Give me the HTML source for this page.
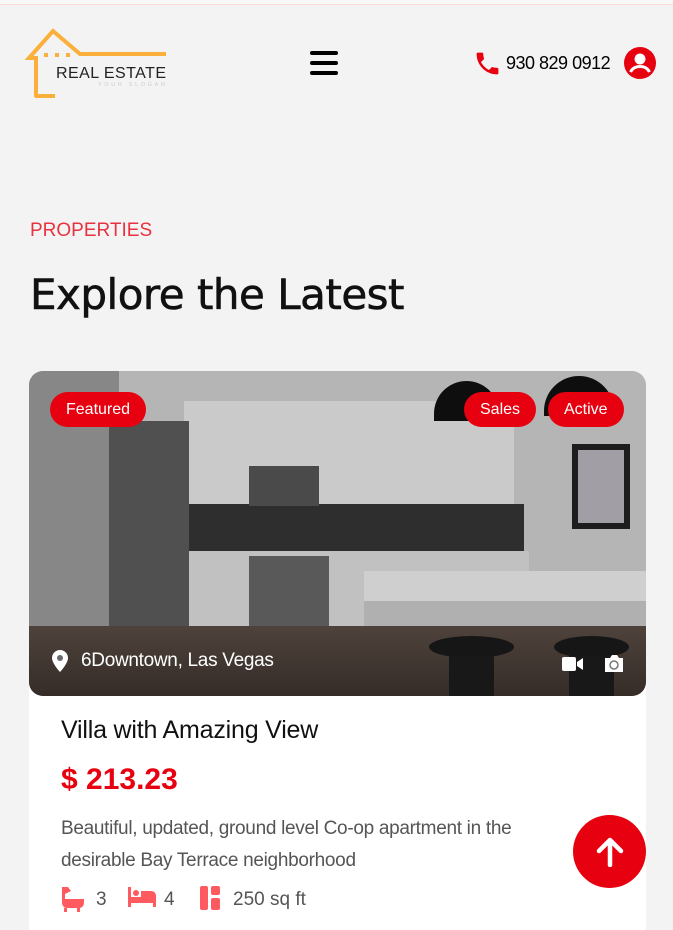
<!DOCTYPE html>
<html><head><meta charset="utf-8"><style>
*{margin:0;padding:0;box-sizing:border-box}
body{width:673px;height:916px;overflow:hidden;background:#f3f3f3;font-family:"Liberation Sans",sans-serif;position:relative}
.a{position:absolute}
.top{left:0;top:0;width:673px;height:5px;border-bottom:1px solid #fbd9d4;background:#f8f8f8}
.pill{position:absolute;top:392px;height:35px;border-radius:18px;background:#e7000f;color:#fff;font-size:16px;line-height:35px;padding:0 16px}
</style></head><body>
<div class="a top"></div>
<!-- logo -->
<svg class="a" style="left:0;top:0" width="180" height="110" viewBox="0 0 180 110">
<path d="M36 97 V58 H29 L53 31 L80 54 H166" fill="none" stroke="#fbb03b" stroke-width="4"/>
<path d="M35 96 H55" stroke="#fbb03b" stroke-width="4"/>
<rect x="44" y="53" width="4" height="4" fill="#fbb03b"/><rect x="55" y="53" width="4" height="4" fill="#fbb03b"/><rect x="66" y="53" width="4" height="4" fill="#fbb03b"/>
<text x="56" y="78" font-family="Liberation Sans" font-size="16" fill="#222" textLength="110">REAL ESTATE</text>
<text x="98" y="86" font-family="Liberation Sans" font-size="5.5" fill="#ccc" letter-spacing="1" textLength="68">YOUR SLOGAN</text>
</svg>
<!-- hamburger -->
<div class="a" style="left:310px;top:51px;width:28px;height:4px;background:#000;border-radius:2px"></div>
<div class="a" style="left:310px;top:61px;width:28px;height:4px;background:#000;border-radius:2px"></div>
<div class="a" style="left:310px;top:71px;width:28px;height:4px;background:#000;border-radius:2px"></div>
<!-- phone -->
<svg class="a" style="left:473px;top:49px" width="29" height="29" viewBox="0 0 24 24"><path d="M6.6 10.8c1.4 2.8 3.8 5.1 6.6 6.6l2.2-2.2c.3-.3.7-.4 1-.2 1.1.4 2.3.6 3.6.6.6 0 1 .4 1 1V20c0 .6-.4 1-1 1C10.6 21 3 13.4 3 4c0-.6.4-1 1-1h3.5c.6 0 1 .4 1 1 0 1.3.2 2.5.6 3.6.1.3 0 .7-.2 1z" fill="#e7000f"/></svg>
<div class="a" style="left:506px;top:53px;font-size:18px;color:#000;letter-spacing:-0.5px">930 829 0912</div>
<svg class="a" style="left:624px;top:47px" width="32" height="32" viewBox="0 0 32 32"><circle cx="16" cy="16" r="16" fill="#e7000f"/><circle cx="16" cy="12" r="5.5" fill="#fff"/><path d="M6.5 25c2-4 5.5-5.5 9.5-5.5s7.5 1.5 9.5 5.5" fill="none" stroke="#fff" stroke-width="3"/></svg>
<div class="a" style="left:30px;top:220px;font-size:19px;color:#e7333f">PROPERTIES</div>
<div class="a" style="left:30px;top:270px;color:#111;font-family:'DejaVu Sans',sans-serif;letter-spacing:-0.5px;font-size:42px;font-weight:500;-webkit-text-stroke:0.6px #111">Explore the Latest</div>
<!-- card -->
<div class="a" style="left:29px;top:680px;width:617px;height:250px;background:#fff"></div>
<div class="a" style="left:29px;top:371px;width:617px;height:325px;border-radius:14px;overflow:hidden;background:#cfcfcf">
 <div class="a" style="left:0;top:0;width:90px;height:325px;background:#9a9a9a"></div>
 <div class="a" style="left:155px;top:30px;width:330px;height:105px;background:#e6e6e6"></div>
 <div class="a" style="left:155px;top:133px;width:340px;height:50px;background:#353535"></div>
 <div class="a" style="left:155px;top:180px;width:345px;height:95px;background:#dcdcdc"></div>
 <div class="a" style="left:220px;top:95px;width:70px;height:40px;background:#555"></div>
 <div class="a" style="left:220px;top:185px;width:80px;height:90px;background:#666"></div>
 <div class="a" style="left:80px;top:50px;width:80px;height:235px;background:#5c5c5c"></div>
 <div class="a" style="left:335px;top:200px;width:282px;height:30px;background:#ececec"></div>
 <div class="a" style="left:335px;top:230px;width:282px;height:60px;background:#c9c9c9"></div>
 <div class="a" style="left:543px;top:73px;width:58px;height:85px;background:#222"></div>
 <div class="a" style="left:549px;top:79px;width:46px;height:73px;background:#b9b4bd"></div>
 <div class="a" style="left:405px;top:10px;width:65px;height:40px;border-radius:35px 35px 0 0;background:#111"></div>
 <div class="a" style="left:515px;top:5px;width:70px;height:40px;border-radius:35px 35px 0 0;background:#111"></div>
 <div class="a" style="left:0;top:255px;width:617px;height:70px;background:linear-gradient(#5a4c44,#3d332e)"></div>
 <div class="a" style="left:400px;top:265px;width:85px;height:22px;border-radius:50%;background:#1a1a1a"></div>
 <div class="a" style="left:525px;top:265px;width:75px;height:22px;border-radius:50%;background:#1a1a1a"></div>
 <div class="a" style="left:420px;top:285px;width:45px;height:40px;background:#1c1c1c"></div>
 <div class="a" style="left:540px;top:285px;width:45px;height:40px;background:#1c1c1c"></div>
 <div class="a" style="left:0;top:0;width:617px;height:325px;background:rgba(0,0,0,0.12)"></div>
</div>
<div class="pill" style="left:50px">Featured</div>
<div class="pill" style="left:464px">Sales</div>
<div class="pill" style="left:548px">Active</div>
<svg class="a" style="left:52px;top:650px" width="16" height="22" viewBox="0 0 16 22"><path d="M8 0C3.6 0 0 3.5 0 8c0 5.5 8 14 8 14s8-8.5 8-14C16 3.5 12.4 0 8 0z" fill="#fff"/><circle cx="8" cy="8" r="3" fill="#6a6a6a"/></svg>
<div class="a" style="left:81px;top:650px;font-size:19px;color:#fff;letter-spacing:-0.3px">6Downtown, Las Vegas</div>
<svg class="a" style="left:562px;top:656px" width="22" height="16" viewBox="0 0 22 16"><rect x="0" y="1" width="14" height="14" rx="2" fill="#fff"/><path d="M15 6l6-4v12l-6-4z" fill="#fff"/></svg>
<svg class="a" style="left:603px;top:653px" width="22" height="20" viewBox="0 0 22 20"><path d="M2 5h5l2-3h5l2 3h4v14H2z" fill="#fff"/><circle cx="11" cy="12" r="4" fill="none" stroke="#777" stroke-width="1.5"/></svg>
<div class="a" style="left:61px;top:716px;font-size:25px;color:#111;letter-spacing:-0.2px">Villa with Amazing View</div>
<div class="a" style="left:61px;top:763px;font-size:30px;font-weight:bold;color:#e7000f">$ 213.23</div>
<div class="a" style="left:61px;top:813px;font-size:19px;line-height:32px;color:#555;width:520px;letter-spacing:-0.3px">Beautiful, updated, ground level Co-op apartment in the desirable Bay Terrace neighborhood</div>
<svg class="a" style="left:60px;top:885px" width="24" height="28" viewBox="0 0 24 28"><path d="M2 2h6l3 4-6 3V14h19v3c0 4-2 6-5 6H7c-3 0-5-2-5-6z" fill="#ff5a5f"/><rect x="4" y="23" width="3" height="4" fill="#ff5a5f"/><rect x="17" y="23" width="3" height="4" fill="#ff5a5f"/></svg>
<div class="a" style="left:96px;top:889px;font-size:19px;color:#555">3</div>
<svg class="a" style="left:128px;top:887px" width="28" height="20" viewBox="0 0 28 20"><rect x="0" y="0" width="3" height="20" fill="#ff5a5f"/><rect x="0" y="10" width="28" height="6" fill="#ff5a5f"/><circle cx="8" cy="6" r="3" fill="#ff5a5f"/><path d="M13 4h10c3 0 5 2 5 5v1H13z" fill="#ff5a5f"/><rect x="25" y="14" width="3" height="6" fill="#ff5a5f"/></svg>
<div class="a" style="left:164px;top:889px;font-size:19px;color:#555">4</div>
<svg class="a" style="left:200px;top:886px" width="20" height="24" viewBox="0 0 20 24"><rect x="0" y="0" width="8" height="24" rx="2" fill="#ff5a5f"/><rect x="11" y="0" width="9" height="9" rx="2" fill="#ff5a5f"/><rect x="11" y="12" width="9" height="12" rx="2" fill="#ff5a5f"/></svg>
<div class="a" style="left:233px;top:889px;font-size:19px;color:#555">250 sq ft</div>
<div class="a" style="left:573px;top:815px;width:73px;height:73px;border-radius:50%;background:#e7000f"></div>
<svg class="a" style="left:595px;top:837px" width="30" height="30" viewBox="0 0 30 30"><path d="M15 28V4M4 14L15 3l11 11" fill="none" stroke="#fff" stroke-width="4.5" stroke-linecap="round" stroke-linejoin="round"/></svg>
</body></html>
